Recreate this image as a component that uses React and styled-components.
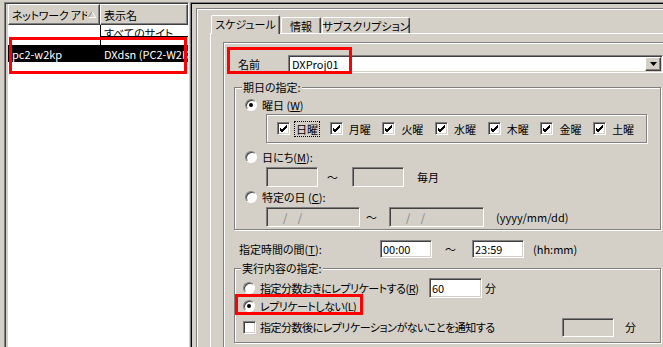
import styled, { createGlobalStyle, css } from 'styled-components';

const GlobalStyle = createGlobalStyle`
    html, body {
        margin: 0;
        padding: 0;
        background: #d4d0c8;
    }
    body {
        font-family: "Noto Sans CJK JP", "Noto Sans", sans-serif;
        font-size: 11px;
        font-feature-settings: "palt";
        color: #000;
    }
`

const sunken = css`
    border: 1px solid;
    border-color: #808080 #fff #fff #808080;
    box-shadow: inset 1px 1px 0 #404040, inset -1px -1px 0 #d4d0c8;
`

const etched = css`
    border: 1px solid #808080;
    box-shadow: 1px 1px 0 #fff, inset 1px 1px 0 #fff;
`

const raised = css`
    border: 1px solid;
    border-color: #fff #404040 #404040 #fff;
    box-shadow: inset -1px -1px 0 #808080;
`

const Window = styled.div`
    position: relative;
    display: flex;
    width: 663px;
    height: 347px;
    overflow: hidden;
`

/* ---------- left list ---------- */

const LeftPane = styled.div`
    width: 189px;
    flex: none;
    box-sizing: border-box;
    padding: 2px 0 0 4px;
    display: flex;
`

const ListView = styled.div`
    width: 185px;
    box-sizing: border-box;
    border-top: 1px solid #808080;
    border-left: 1px solid #808080;
    border-right: 1px solid #fff;
    box-shadow: inset 1px 1px 0 #404040;
    padding: 1px 0 0 3px;
    display: flex;
`

const ListBody = styled.div`
    flex: 1;
    background: #fff;
    display: flex;
    flex-direction: column;
    overflow: hidden;
`

const HeaderRow = styled.div`
    display: flex;
    height: 21px;
    flex: none;
`

const HeaderCell = styled.div`
    ${raised};
    box-sizing: border-box;
    width: ${props => props.$w ? `${props.$w}px` : 'auto'};
    flex: ${props => props.$w ? 'none' : 1};
    background: #d4d0c8;
    display: flex;
    align-items: center;
    padding-left: 3px;
    overflow: hidden;
    white-space: nowrap;

    span {
        flex: 1;
        overflow: hidden;
        letter-spacing: -0.3px;
    }
    svg {
        flex: none;
        margin: 0 3px 0 1px;
    }
`

const GhostRow = styled.div`
    display: flex;
    height: 20px;
    flex: none;
`

const GhostCell = styled.div`
    width: 92px;
    flex: none;
`

const EditCell = styled.div`
    flex: 1;
    border-left: 1px solid #000;
`

const EditClip = styled.div`
    height: 11px;
    border-bottom: 1px solid #000;
    overflow: hidden;
    padding-left: 3px;
    line-height: 16px;
    white-space: nowrap;
`

const SelectedRow = styled.div`
    display: flex;
    height: 17px;
    flex: none;
    background: #000;
    color: #fff;
    align-items: center;
    white-space: nowrap;
`

const ListCell = styled.div`
    width: ${props => props.$w ? `${props.$w}px` : 'auto'};
    flex: ${props => props.$w ? 'none' : 1};
    padding-left: 4px;
    box-sizing: border-box;
    overflow: hidden;
`

/* ---------- right side frames ---------- */

const RightPane = styled.div`
    flex: 1;
    padding-left: 1px;
    display: flex;
    flex-direction: column;
`

const OuterFrame = styled.div`
    margin-top: 2px;
    border-top: 1px solid #808080;
    border-left: 1px solid #808080;
    box-shadow: inset 1px 1px 0 #000;
    padding: 5px 0 0 5px;
    display: flex;
    flex-direction: column;
`

const InnerFrame = styled.div`
    border-top: 1px solid #808080;
    border-left: 1px solid #808080;
    box-shadow: inset 1px 1px 0 #fff;
    padding: 6px 0 0 13px;
    display: flex;
    flex-direction: column;
`

const TabStrip = styled.div`
    display: flex;
    align-items: flex-end;
    gap: 1px;
    height: 18px;
    padding-left: 1px;
`

const Tab = styled.div`
    box-sizing: border-box;
    width: ${props => props.$w}px;
    height: ${props => props.$active ? 19 : 16}px;
    margin-bottom: ${props => props.$active ? -1 : 0}px;
    background: #d4d0c8;
    border-top: 1px solid #fff;
    border-left: 1px solid #fff;
    border-right: 1px solid #404040;
    box-shadow: inset -1px 0 0 #808080;
    border-radius: 2px 2px 0 0;
    display: flex;
    align-items: center;
    justify-content: center;
    padding-bottom: ${props => props.$active ? 2 : 0}px;
    position: relative;
    z-index: ${props => props.$active ? 1 : 0};
    white-space: nowrap;
`

const TabPage = styled.div`
    border-top: 1px solid #fff;
    border-left: 1px solid #fff;
    padding: 8px 0 0 12px;
`

const Panel = styled.div`
    width: 470px;
    border-top: 1px solid #808080;
    border-left: 1px solid #808080;
    box-shadow: inset 1px 1px 0 #fff;
    padding: 12px 0 30px 10px;
    display: flex;
    flex-direction: column;
`

/* ---------- controls ---------- */

const Row = styled.div`
    display: flex;
    align-items: center;
    height: ${props => props.$h || 16}px;
    margin-top: ${props => props.$mt || 0}px;
    margin-left: ${props => props.$ml || 0}px;
    white-space: nowrap;
`

const Label = styled.span`
    flex: none;
    width: ${props => props.$w ? `${props.$w}px` : 'auto'};
    margin-left: ${props => props.$ml || 0}px;
    letter-spacing: ${props => props.$ls || 0}px;
`

const Combo = styled.div`
    ${sunken};
    box-sizing: border-box;
    width: 375px;
    height: 18px;
    background: #fff;
    display: flex;
    align-items: center;
    padding: 0 1px 0 3px;
`

const DropButton = styled.div`
    ${raised};
    box-sizing: border-box;
    width: 16px;
    height: 14px;
    margin-left: auto;
    background: #d4d0c8;
    display: flex;
    align-items: center;
    justify-content: center;
`

const Group = styled.div`
    ${etched};
    box-sizing: border-box;
    width: 427px;
    margin-top: ${props => props.$mt}px;
    padding: 0 0 ${props => props.$pb}px ${props => props.$pl}px;
    display: flex;
    flex-direction: column;
`

const Legend = styled.div`
    align-self: flex-start;
    margin: -8px 0 0 ${props => props.$ml}px;
    padding: 0 1px;
    line-height: 14px;
    height: 14px;
    background: #d4d0c8;
`

const RadioDot = styled.span`
    flex: none;
    width: 12px;
    height: 12px;
    box-sizing: border-box;
    border-radius: 50%;
    border: 1px solid;
    border-color: #808080 #fff #fff #808080;
    box-shadow: inset 1px 1px 0 #404040;
    background: #fff;
    display: flex;
    align-items: center;
    justify-content: center;
    margin-right: ${props => props.$gap || 5}px;

    &::after {
        content: '';
        width: 4px;
        height: 4px;
        border-radius: 50%;
        background: ${props => props.$on ? '#000' : 'transparent'};
    }
`

const CheckBox = styled.span`
    ${sunken};
    flex: none;
    box-sizing: border-box;
    width: 13px;
    height: 13px;
    background: #fff;
    display: flex;
    align-items: center;
    justify-content: center;
    margin-right: ${props => props.$gap || 4}px;
`

const WeekBox = styled.div`
    ${etched};
    box-sizing: border-box;
    width: 381px;
    height: 29px;
    margin: 1px 0 0 21px;
    padding-left: 10px;
    display: flex;
    align-items: center;
`

const DayItem = styled.div`
    width: 52.7px;
    flex: none;
    display: flex;
    align-items: center;
`

const DayText = styled.span`
    margin-left: 1px;
    padding: 0 1px;
    line-height: 14px;
    outline: ${props => props.$focus ? '1px dotted #000' : 'none'};
`

const Field = styled.div`
    ${sunken};
    box-sizing: border-box;
    flex: none;
    width: ${props => props.$w}px;
    height: ${props => props.$h || 20}px;
    background: ${props => props.$disabled ? '#d4d0c8' : '#fff'};
    color: ${props => props.$disabled ? '#808080' : '#000'};
    padding-left: ${props => props.$pl || 3}px;
    display: flex;
    align-items: center;
    letter-spacing: ${props => props.$ls || 0}px;
`

const Tilde = styled.span`
    flex: none;
    width: ${props => props.$w}px;
    padding-left: ${props => props.$pl}px;
    box-sizing: border-box;
`

const Annotation = styled.div`
    position: absolute;
    left: ${props => props.$x}px;
    top: ${props => props.$y}px;
    width: ${props => props.$w}px;
    height: ${props => props.$h}px;
    box-sizing: border-box;
    border: 3px solid #ff0000;
    pointer-events: none;
`

function Check() {
    return (
        <svg width="9" height="9" viewBox="0 0 9 9">
            <path d="M1 4 L3 6 L8 1 M1 5 L3 7 L8 2 M1 6 L3 8 L8 3" stroke="#000" strokeWidth="1" fill="none" />
        </svg>
    );
}

function Radio({ on, children, gap, ls }) {
    return (
        <>
            <RadioDot $on={on} $gap={gap} />
            <Label $ls={ls}>{children}</Label>
        </>
    );
}

const days = ['日曜', '月曜', '火曜', '水曜', '木曜', '金曜', '土曜'];

function App() {
    return (
        <Window>
            <GlobalStyle />
            <LeftPane>
                <ListView>
                    <ListBody>
                        <HeaderRow>
                            <HeaderCell $w={92}>
                                <span>ネットワーク アドレス</span>
                                <svg width="8" height="7" viewBox="0 0 8 7">
                                    <path d="M0.5 6.5 L4 0.5" stroke="#808080" fill="none" />
                                    <path d="M4 0.5 L7.5 6.5 L0.5 6.5" stroke="#fff" fill="none" />
                                </svg>
                            </HeaderCell>
                            <HeaderCell>表示名</HeaderCell>
                        </HeaderRow>
                        <GhostRow>
                            <GhostCell />
                            <EditCell>
                                <EditClip>すべてのサイト</EditClip>
                            </EditCell>
                        </GhostRow>
                        <SelectedRow>
                            <ListCell $w={92}>pc2-w2kp</ListCell>
                            <ListCell>DXdsn (PC2-W2KP)</ListCell>
                        </SelectedRow>
                    </ListBody>
                </ListView>
            </LeftPane>

            <RightPane>
                <OuterFrame>
                    <InnerFrame>
                        <TabStrip>
                            <Tab $w={69} $active>スケジュール</Tab>
                            <Tab $w={40}>情報</Tab>
                            <Tab $w={88}>サブスクリプション</Tab>
                        </TabStrip>
                        <TabPage>
                            <Panel>
                                <Row $h={18}>
                                    <Label $ml={4} $w={50}>名前</Label>
                                    <Combo>
                                        DXProj01
                                        <DropButton>
                                            <svg width="7" height="4" viewBox="0 0 7 4">
                                                <path d="M0 0 H7 L3.5 4 Z" fill="#000" />
                                            </svg>
                                        </DropButton>
                                    </Combo>
                                </Row>

                                <Group $mt={14} $pb={2} $pl={10}>
                                    <Legend $ml={-3}>期日の指定:</Legend>
                                    <Row $mt={3}>
                                        <Radio on>曜日 (<u>W</u>)</Radio>
                                    </Row>
                                    <WeekBox>
                                        {days.map((d, i) => (
                                            <DayItem key={d}>
                                                <CheckBox><Check /></CheckBox>
                                                <DayText $focus={i === 0}>{d}</DayText>
                                            </DayItem>
                                        ))}
                                    </WeekBox>
                                    <Row $mt={6}>
                                        <Radio>日にち(<u>M</u>):</Radio>
                                    </Row>
                                    <Row $h={20} $mt={2} $ml={21}>
                                        <Field $w={52} $disabled />
                                        <Tilde $w={34} $pl={9}>～</Tilde>
                                        <Field $w={52} $disabled />
                                        <Label $ml={13}>毎月</Label>
                                    </Row>
                                    <Row $mt={2}>
                                        <Radio>特定の日 (<u>C</u>):</Radio>
                                    </Row>
                                    <Row $h={20} $mt={2} $ml={21}>
                                        <Field $w={94} $disabled $pl={16} $ls={4}>/ /</Field>
                                        <Tilde $w={29} $pl={6}>～</Tilde>
                                        <Field $w={95} $disabled $pl={16} $ls={4}>/ /</Field>
                                        <Label $ml={12}>(yyyy/mm/dd)</Label>
                                    </Row>
                                </Group>

                                <Row $h={18} $mt={10}>
                                    <Label $ml={5} $w={141}>指定時間の間(<u>T</u>):</Label>
                                    <Field $w={52} $h={18} $pl={2}>00:00</Field>
                                    <Tilde $w={40} $pl={13}>～</Tilde>
                                    <Field $w={52} $h={18} $pl={2}>23:59</Field>
                                    <Label $ml={9}>(hh:mm)</Label>
                                </Row>

                                <Group $mt={10} $pb={5} $pl={8}>
                                    <Legend $ml={-2}>実行内容の指定:</Legend>
                                    <Row $h={20} $mt={3}>
                                        <RadioDot />
                                        <Label $w={169} $ls={-0.5}>指定分数おきにレプリケートする(<u>R</u>)</Label>
                                        <Field $w={53} $pl={2}>60</Field>
                                        <Label $ml={3}>分</Label>
                                    </Row>
                                    <Row>
                                        <Radio on ls={-0.5}>レプリケートしない(<u>L</u>)</Radio>
                                    </Row>
                                    <Row $h={20} $mt={3}>
                                        <CheckBox />
                                        <Label $w={302} $ls={-0.5}>指定分数後にレプリケーションがないことを通知する</Label>
                                        <Field $w={52} $h={19} $disabled />
                                        <Label $ml={11}>分</Label>
                                    </Row>
                                </Group>
                            </Panel>
                        </TabPage>
                    </InnerFrame>
                </OuterFrame>
            </RightPane>

            <Annotation $x={9} $y={37} $w={178} $h={37} />
            <Annotation $x={227} $y={47} $w={125} $h={27} />
            <Annotation $x={235} $y={294} $w={128} $h={21} />
        </Window>
    );
}

export default App;
